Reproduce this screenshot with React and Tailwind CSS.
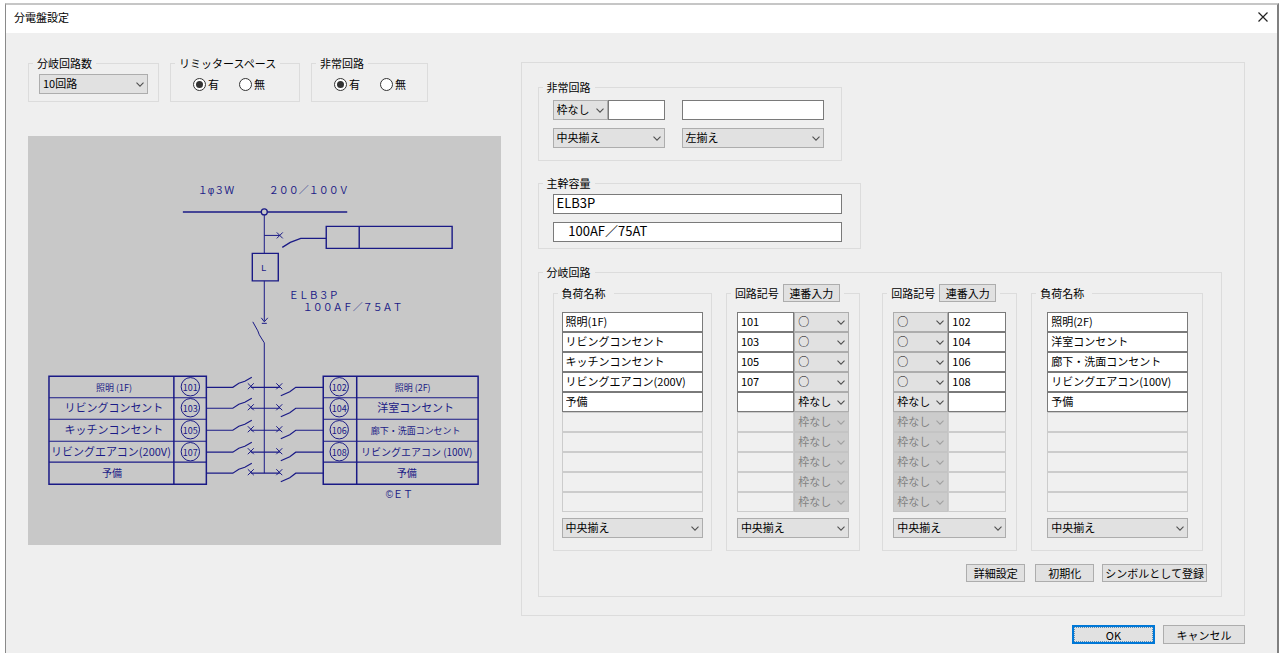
import { useState } from "react";

const LEFT_LOADS = ["照明(1F)", "リビングコンセント", "キッチンコンセント", "リビングエアコン(200V)", "予備", "", "", "", "", ""];
const RIGHT_LOADS = ["照明(2F)", "洋室コンセント", "廊下・洗面コンセント", "リビングエアコン(100V)", "予備", "", "", "", "", ""];
const LEFT_CODES = ["101", "103", "105", "107", "", "", "", "", "", ""];
const RIGHT_CODES = ["102", "104", "106", "108", "", "", "", "", "", ""];
const ACTIVE_ROWS = 5;

function Group({ title, action, className = "", children }) {
  return (
    <fieldset className={`min-w-0 border border-[#dcdcdc] ${className}`}>
      <legend className="ml-1 px-1 leading-4">
        {action ? (
          <span className="flex h-[18px] items-center gap-1">
            {title}
            {action}
          </span>
        ) : (
          title
        )}
      </legend>
      {children}
    </fieldset>
  );
}

function Select({ label, value, options, disabled = false, className = "" }) {
  const [current, setCurrent] = useState(value);
  return (
    <span className={`relative block h-5 ${className}`}>
      <select
        aria-label={label}
        value={current}
        disabled={disabled}
        onChange={(e) => setCurrent(e.target.value)}
        className="block h-full w-full appearance-none border border-[#adadad] bg-[#e1e1e1] pb-px pl-[3px] pr-3 text-black disabled:border-[#c4c4c4] disabled:bg-[#cccccc] disabled:text-[#838383] disabled:opacity-100"
      >
        {options.map((o) => (
          <option key={o}>{o}</option>
        ))}
      </select>
      <svg
        viewBox="0 0 8 5"
        className={`pointer-events-none absolute right-1 top-2 h-[5px] w-2 ${disabled ? "text-[#a0a0a0]" : "text-[#505050]"}`}
        fill="none"
        stroke="currentColor"
        strokeWidth="1.1"
        aria-hidden="true"
      >
        <path d="M0.5 0.6 4 4.1 7.5 0.6" />
      </svg>
    </span>
  );
}

function TextBox({ label, value = "", disabled = false, className = "" }) {
  return (
    <input
      type="text"
      aria-label={label}
      defaultValue={value}
      disabled={disabled}
      className={`block h-5 w-full min-w-0 border border-[#7a7a7a] bg-white pb-[3px] pl-[3px] disabled:border-[#cccccc] disabled:bg-[#f0f0f0] ${className}`}
    />
  );
}

function Button({ className = "", children }) {
  return (
    <button type="button" className={`border border-[#adadad] bg-[#e1e1e1] leading-4 ${className}`}>
      {children}
    </button>
  );
}

function Radios({ name }) {
  return (
    <div className="flex gap-5 pb-[7px] pl-[22px] pt-[3px]">
      {["有", "無"].map((text, i) => (
        <label key={text} className="flex items-center gap-0.5 leading-5">
          <input
            type="radio"
            name={name}
            defaultChecked={i === 0}
            className="grid size-[13px] appearance-none place-content-center rounded-full border border-[#333333] bg-white before:size-[7px] before:rounded-full checked:before:bg-[#333333]"
          />
          {text}
        </label>
      ))}
    </div>
  );
}

const ALIGN = ["中央揃え", "左揃え", "右揃え"];
const FRAMES = ["枠なし", "○"];

function LoadColumn({ side, loads, bodyClass }) {
  return (
    <div className={`pb-3 ${bodyClass}`}>
      <div className="mb-1.5">
        {loads.map((v, i) => (
          <TextBox key={i} label={`${side}負荷名称${i + 1}`} value={v} disabled={i >= ACTIVE_ROWS} />
        ))}
      </div>
      <Select label={`${side}負荷名称の配置`} value="中央揃え" options={ALIGN} />
    </div>
  );
}

function CodeColumn({ side, codes, reversed = false }) {
  return (
    <div className="px-[10px] pb-3 pt-[10px]">
      <div className="mb-1.5">
        {codes.map((v, i) => (
          <div key={i} className={`flex ${reversed ? "flex-row-reverse" : ""}`}>
            <TextBox label={`${side}回路記号${i + 1}`} value={v} disabled={i >= ACTIVE_ROWS} className="flex-1" />
            <Select
              label={`${side}回路枠${i + 1}`}
              value={v ? "○" : "枠なし"}
              options={FRAMES}
              disabled={i >= ACTIVE_ROWS}
              className="w-[55px]"
            />
          </div>
        ))}
      </div>
      <Select label={`${side}回路記号の配置`} value="中央揃え" options={ALIGN} />
    </div>
  );
}

const BRANCHES = [
  { y: 387.5, left: "照明 (1F)", lx: 114, ls: 9, lc: "101", right: "照明 (2F)", rx: 413, rs: 9, rc: "102" },
  { y: 408.5, left: "リビングコンセント", lx: 114, ls: 11, lc: "103", right: "洋室コンセント", rx: 416, rs: 11, rc: "104" },
  { y: 430.5, left: "キッチンコンセント", lx: 114, ls: 11, lc: "105", right: "廊下・洗面コンセント", rx: 416, rs: 9, rc: "106" },
  { y: 452.5, left: "リビングエアコン(200V)", lx: 111, ls: 11, lc: "107", right: "リビングエアコン (100V)", rx: 417, rs: 10, rc: "108" },
  { y: 473.5, left: "予備", lx: 112, ls: 10, right: "予備", rx: 407, rs: 10 },
];

function Cross({ x, y }) {
  return <path d={`M${x - 3} ${y - 3}l6 6M${x + 3} ${y - 3}l-6 6`} />;
}

function WiringDiagram() {
  return (
    <svg viewBox="28 136 473 409" className="block w-full bg-[#c8c8c8]" role="img" aria-label="単線結線図">
      <g fill="none" stroke="#1a1a86" strokeWidth="1">
        <path d="M183 212H347.500" strokeWidth="1.6" />
        <circle cx="264.500" cy="212" r="3" fill="#c8c8c8" strokeWidth="1.3" />
        <path d="M264.500 215V253.500M264.500 281V321M253 322l5 9 1.500 4 5 8V473.500" />
        <path d="M264.500 235.500H280" />
        <Cross x={280} y={235.5} />
        <path d="M282.500 247.500l8-5 10.500-4H326.500" strokeWidth="1.3" />
        <path d="M326.500 226.500H452.500V248.500H326.500ZM359.500 226.500V248.500" strokeWidth="1.4" />
        <path d="M252.500 253.500H278.500V281H252.500Z" strokeWidth="1.4" />
        <path d="M261.500 318l3 4 3.500-4M262 323.500h5" />
        <path d="M49 376.500H206.500V484.500H49ZM174 376.500V484.500M323.500 376.500H478.500V484.500H323.500ZM357 376.500V484.500" strokeWidth="1.5" />
        {[398, 419.5, 441.5, 462.5].map((y) => (
          <path key={y} d={`M49 ${y}H206.500M323.500 ${y}H478.500`} strokeWidth="1.2" />
        ))}
        {BRANCHES.map(({ y, lc }) => (
          <g key={y}>
            <path d={`M206.500 ${y}H233l6-4 6-2 7-4M251 ${y}H280M281 ${y + 8.5}l9-4 6-4.500H323.500`} strokeWidth="1.2" />
            <Cross x={251} y={y - 1} />
            <Cross x={279.5} y={y - 1} />
            {lc && <circle cx="190.500" cy={y - 0.5} r="9.200" />}
            {lc && <circle cx="339.500" cy={y - 0.5} r="9.200" />}
          </g>
        ))}
      </g>
      <g fill="#1a1a86" fontSize="10" className="font-['Liberation_Sans','Noto_Sans_CJK_JP',sans-serif]">
        <text x="198" y="194">１φ３Ｗ</text>
        <text x="269" y="194">２００／１００Ｖ</text>
        <text x="264" y="271.500" fontSize="9" textAnchor="middle">L</text>
        <text x="289" y="299">ＥＬＢ３Ｐ</text>
        <text x="303" y="311">１００ＡＦ／７５ＡＴ</text>
        <text x="386" y="498">©ＥＴ</text>
      </g>
      <g fill="#1a1a86" textAnchor="middle">
        {BRANCHES.map((b) => (
          <g key={b.y}>
            <text x={b.lx} y={b.y + 4} fontSize={b.ls}>{b.left}</text>
            <text x={b.rx} y={b.y + 4} fontSize={b.rs}>{b.right}</text>
            {b.lc && <text x="190.500" y={b.y + 3.5} fontSize="9">{b.lc}</text>}
            {b.rc && <text x="339.500" y={b.y + 3.5} fontSize="9">{b.rc}</text>}
          </g>
        ))}
      </g>
    </svg>
  );
}

export default function App() {
  const serial = <Button className="h-[18px] w-[57px]">連番入力</Button>;
  return (
    <div className="px-[5px] pb-3 pt-[3px] font-['Noto_Sans_CJK_JP',sans-serif] text-[11px] text-black">
      <div className="border-l border-r-2 border-t-2 border-l-[#8a8a8a] border-r-[#808080] border-t-[#c6c6c6] bg-[#efefef]">
        <header className="flex h-7 items-center justify-between bg-white pb-1 pl-2 pr-2">
          <h1>分電盤設定</h1>
          <button type="button" aria-label="閉じる" className="p-px">
            <svg viewBox="0 0 10 10" className="size-[10px]" fill="none" stroke="#222222" strokeWidth="1.2" aria-hidden="true">
              <path d="M0.500 0.500l9 9M9.500 0.500l-9 9" />
            </svg>
          </button>
        </header>

        <main className="pb-[9px] pl-[22px] pr-8">
          <div className="grid grid-cols-[473fr_725fr] items-start gap-5">
            <section className="pt-[22px]">
              <div className="mb-[34px] flex items-stretch gap-[11px]">
                <Group title="分岐回路数" className="w-[131px]">
                  <div className="px-[10px] pt-[3px]">
                    <Select label="分岐回路数" value="10回路" options={["10回路", "20回路"]} />
                  </div>
                </Group>
                <Group title="リミッタースペース" className="w-[130px]">
                  <Radios name="limiter" />
                </Group>
                <Group title="非常回路" className="w-[117px]">
                  <Radios name="emergency" />
                </Group>
              </div>
              <WiringDiagram />
            </section>

            <section className="mt-[29px] border border-[#dcdcdc] pb-[18px] pl-4 pr-[22px] pt-4">
              <Group title="非常回路" className="mb-3.5 w-[304px]">
                <div className="grid grid-cols-[112px_142px] gap-x-[17px] gap-y-2 pb-3 pl-3.5 pt-[5px]">
                  <div className="flex">
                    <Select label="非常回路の枠" value="枠なし" options={FRAMES} className="w-[55px]" />
                    <TextBox label="非常回路記号" className="flex-1" />
                  </div>
                  <TextBox label="非常回路名称" />
                  <Select label="非常回路記号の配置" value="中央揃え" options={ALIGN} />
                  <Select label="非常回路名称の配置" value="左揃え" options={ALIGN} />
                </div>
              </Group>

              <Group title="主幹容量" className="mb-[15px] w-[323px]">
                <div className="flex flex-col gap-2 pb-1.5 pl-3.5 pr-[18px] pt-[3px] text-[13px]">
                  <TextBox label="主幹種別" value="ELB3P" />
                  <TextBox label="主幹定格" value="    100AF／75AT" />
                </div>
              </Group>

              <Group title="分岐回路">
                <div className="flex gap-[22px] pl-3.5 pr-[18px] pt-1">
                  <div className="grid flex-[308] grid-cols-[160fr_135fr] gap-[14px]">
                    <Group title="負荷名称" action={<span />}>
                      <LoadColumn side="左" loads={LEFT_LOADS} bodyClass="px-2 pt-[10px]" />
                    </Group>
                    <Group title="回路記号" action={serial}>
                      <CodeColumn side="左" codes={LEFT_CODES} />
                    </Group>
                  </div>
                  <div className="grid flex-[321] grid-cols-[135fr_172fr] gap-[14px]">
                    <Group title="回路記号" action={serial}>
                      <CodeColumn side="右" codes={RIGHT_CODES} reversed />
                    </Group>
                    <Group title="負荷名称" action={<span />}>
                      <LoadColumn side="右" loads={RIGHT_LOADS} bodyClass="pl-[15px] pr-[14px] pt-[10px]" />
                    </Group>
                  </div>
                </div>
                <div className="flex justify-end gap-2 pb-3.5 pr-3.5 pt-[13px]">
                  <Button className="mr-0.5 h-[18px] w-[59px]">詳細設定</Button>
                  <Button className="h-[18px] w-[59px]">初期化</Button>
                  <Button className="h-[18px] px-0.5">シンボルとして登録</Button>
                </div>
              </Group>
            </section>
          </div>

          <div className="mt-[9px] flex justify-end gap-2">
            <button
              type="button"
              className="h-[19px] w-[83px] border-2 border-[#0078d7] bg-[#e1e1e1] leading-3 outline-1 -outline-offset-3 outline-dotted outline-[#5a8db5]"
            >
              OK
            </button>
            <Button className="h-[19px] w-[82px]">キャンセル</Button>
          </div>
        </main>
      </div>
    </div>
  );
}
